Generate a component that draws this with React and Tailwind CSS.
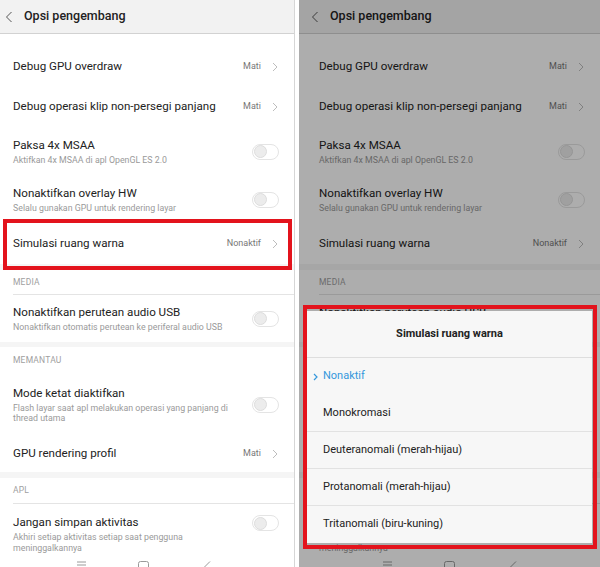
import React from "react";

const Chevron = ({ color = "#bdbdbd" }) => (
  <svg width="6" height="10" viewBox="0 0 6 10" className="shrink-0">
    <path d="M1 1l4 4-4 4" stroke={color} fill="none" strokeWidth="1" />
  </svg>
);

const Toggle = () => (
  <div className="w-[27px] h-[16px] rounded-full border border-[#e4e4e4] bg-white flex items-center pl-[1px] shrink-0">
    <div className="w-[13px] h-[13px] rounded-full bg-[#ececec] border border-[#dddddd]" />
  </div>
);

const ValueRow = ({ title, value, h }) => (
  <div className={`flex items-center pl-[20px] pr-[16px] ${h}`}>
    <div className="flex-1 text-[11.6px] text-[#222]">{title}</div>
    <div className="text-[9px] text-[#777] mr-[11px]">{value}</div>
    <Chevron />
  </div>
);

const ToggleRow = ({ title, sub, h, align = "items-center", pt = "" }) => (
  <div className={`flex ${align} pl-[20px] pr-[15px] ${h} ${pt}`}>
    <div className="flex-1 pr-[12px]">
      <div className="text-[11.6px] leading-[15px] text-[#222]">{title}</div>
      <div className="text-[8.8px] leading-[10.5px] text-[#9a9a9a] mt-[2px]">{sub}</div>
    </div>
    <Toggle />
  </div>
);

const Band = ({ h }) => <div className={`${h} bg-[#f5f5f5]`} />;

const Section = ({ label, h, line = true }) => (
  <div className={`${h} pl-[20px] flex flex-col`}>
    <div className={`flex-1 flex items-center text-[8.5px] text-[#a0a0a0] tracking-[0.2px] ${line ? "border-b border-[#e4e4e4]" : ""}`}>
      {label}
    </div>
  </div>
);

const Screen = () => (
  <div className="w-[301px] h-[567px] bg-white overflow-hidden">
    <div className="h-[34px] bg-[#f2f2f2] border-b border-[#d2d2d2] flex items-center">
      <svg width="8" height="12" viewBox="0 0 8 12" className="ml-[12px]">
        <path d="M6.5 1L1.5 6l5 5" stroke="#555" fill="none" strokeWidth="1" />
      </svg>
      <div className="ml-[11px] text-[12.5px] font-medium text-[#222]">Opsi pengembang</div>
    </div>
    <div className="h-[13px]" />
    <ValueRow title="Debug GPU overdraw" value="Mati" h="h-[40px]" />
    <ValueRow title="Debug operasi klip non-persegi panjang" value="Mati" h="h-[40px]" />
    <ToggleRow title="Paksa 4x MSAA" sub="Aktifkan 4x MSAA di apl OpenGL ES 2.0" h="h-[49px]" />
    <ToggleRow title="Nonaktifkan overlay HW" sub="Selalu gunakan GPU untuk rendering layar" h="h-[47px]" />
    <ValueRow title="Simulasi ruang warna" value="Nonaktif" h="h-[41px]" />
    <Band h="h-[6px]" />
    <Section label="MEDIA" h="h-[25px]" />
    <ToggleRow title="Nonaktifkan perutean audio USB" sub="Nonaktifkan otomatis perutean ke periferal audio USB" h="h-[47px]" />
    <Band h="h-[5px]" />
    <Section label="MEMANTAU" h="h-[26px]" line={false} />
    <ToggleRow title="Mode ketat diaktifkan" sub="Flash layar saat apl melakukan operasi yang panjang di thread utama" h="h-[63px]" />
    <ValueRow title="GPU rendering profil" value="Mati" h="h-[36px]" />
    <Band h="h-[6px]" />
    <Section label="APL" h="h-[26px]" />
    <ToggleRow title="Jangan simpan aktivitas" sub="Akhiri setiap aktivitas setiap saat pengguna meninggalkannya" h="h-[53px]" align="items-start" pt="pt-[11px]" />
    <div className="flex items-start pt-[4px] h-[20px]">
      <svg width="9" height="8" viewBox="0 0 9 8" className="ml-[84px]">
        <path d="M0 1h9M0 4h9M0 7h9" stroke="#9a9a9a" strokeWidth="1" />
      </svg>
      <svg width="11" height="11" viewBox="0 0 11 11" className="ml-[52px]">
        <rect x="0.5" y="0.5" width="10" height="10" rx="2" stroke="#9a9a9a" fill="none" />
      </svg>
      <svg width="8" height="12" viewBox="0 0 8 12" className="ml-[54px]">
        <path d="M7 0.5L1.5 6L7 11.5" stroke="#9a9a9a" fill="none" strokeWidth="1" />
      </svg>
    </div>
  </div>
);

const options = [
  "Nonaktif",
  "Monokromasi",
  "Deuteranomali (merah-hijau)",
  "Protanomali (merah-hijau)",
  "Tritanomali (biru-kuning)",
];

export default function App() {
  return (
    <div
      className="w-[600px] h-[567px] bg-white flex overflow-hidden"
      style={{ fontFamily: "Roboto, 'Noto Sans', sans-serif" }}
    >
      <div className="relative w-[295px] h-[567px] overflow-hidden shrink-0 border-r border-[#d6d6d6]">
        <div className="ml-[-7px]">
          <Screen />
        </div>
        <div className="absolute left-[3px] top-[219px] w-[289px] h-[51px] border-[4px] border-[#e3131c]" />
      </div>
      <div className="w-[4px] shrink-0" />
      <div className="relative w-[301px] h-[567px] overflow-hidden shrink-0">
        <Screen />
        <div className="absolute inset-0 bg-black/[0.32]" />
        <div className="absolute left-[8px] top-[311px] w-[285px] h-[232px] bg-[#f7f7f7] flex flex-col">
          <div className="h-[47px] shrink-0 border-b border-[#dedede] flex items-center justify-center text-[11px] font-bold text-[#222]">
            Simulasi ruang warna
          </div>
          {options.map((o, i) => (
            <div
              key={o}
              className={`h-[37px] shrink-0 flex items-center relative pl-[16px] text-[11px] ${
                i === 0 ? "text-[#3598dc]" : "text-[#222]"
              } ${i >= 1 && i <= 3 ? "border-b border-[#e2e2e2]" : ""}`}
            >
              {i === 0 && (
                <svg width="5" height="8" viewBox="0 0 5 8" className="absolute left-[6px]">
                  <path d="M1 1l3 3-3 3" stroke="#3598dc" fill="none" strokeWidth="1.2" />
                </svg>
              )}
              {o}
            </div>
          ))}
        </div>
        <div className="absolute left-[4px] top-[305px] w-[294px] h-[244px] border-[4px] border-[#e3131c]" />
      </div>
    </div>
  );
}
